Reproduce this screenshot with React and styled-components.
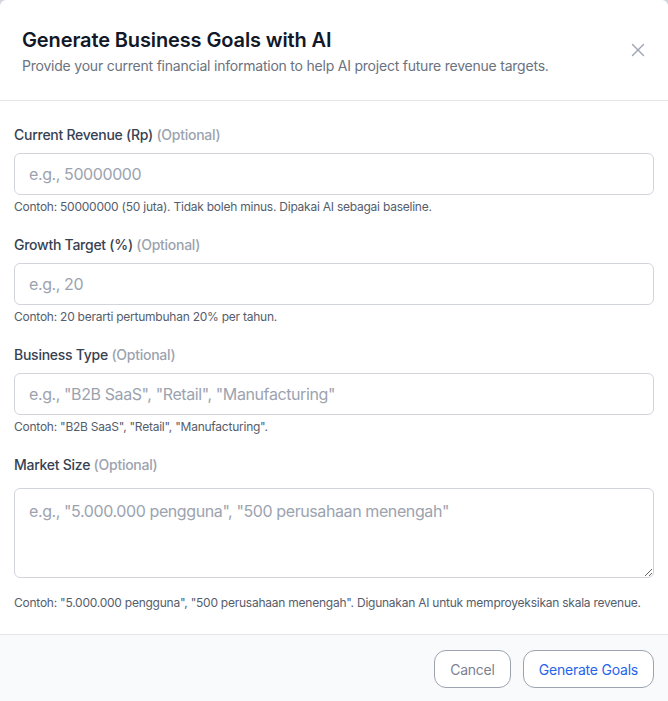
import React from 'react'
import styled, { createGlobalStyle } from 'styled-components';

const GlobalStyle = createGlobalStyle`
  html, body { margin: 0; padding: 0; background: #d1d5db; }
  body { font-family: Inter, "Noto Sans", sans-serif; }
  * { box-sizing: border-box; }
`;

const fields = [
  { label: 'Current Revenue (Rp)', placeholder: 'e.g., 50000000', help: 'Contoh: 50000000 (50 juta). Tidak boleh minus. Dipakai AI sebagai baseline.' },
  { label: 'Growth Target (%)', placeholder: 'e.g., 20', help: 'Contoh: 20 berarti pertumbuhan 20% per tahun.' },
  { label: 'Business Type', placeholder: 'e.g., "B2B SaaS", "Retail", "Manufacturing"', help: 'Contoh: "B2B SaaS", "Retail", "Manufacturing".' },
];

function App() {
  return (
    <>
      <GlobalStyle />
      <Dialog>
        <Header>
          <HeaderText>
            <Title>Generate Business Goals with AI</Title>
            <Subtitle>Provide your current financial information to help AI project future revenue targets.</Subtitle>
          </HeaderText>
          <CloseButton aria-label="Close">
            <svg width="14" height="14" viewBox="0 0 14 14" fill="none">
              <path d="M1.5 1.5l11 11M12.5 1.5l-11 11" stroke="#9ca3af" strokeWidth="1.4" strokeLinecap="round" />
            </svg>
          </CloseButton>
        </Header>
        <Body>
          {fields.map((f) => (
            <Field key={f.label}>
              <Label>{f.label} <Optional>(Optional)</Optional></Label>
              <Input placeholder={f.placeholder} />
              <Help>{f.help}</Help>
            </Field>
          ))}
          <Field>
            <Label>Market Size <Optional>(Optional)</Optional></Label>
            <TextArea placeholder={'e.g., "5.000.000 pengguna", "500 perusahaan menengah"'} />
            <Help $gap="17px">Contoh: "5.000.000 pengguna", "500 perusahaan menengah". Digunakan AI untuk memproyeksikan skala revenue.</Help>
          </Field>
        </Body>
        <Footer>
          <Button>Cancel</Button>
          <Button $primary>Generate Goals</Button>
        </Footer>
      </Dialog>
    </>
  )
}

const Dialog = styled.div`
width: 668px;
height: 701px;
background: #fff;
border-radius: 6px 6px 0 0;
display: flex;
flex-direction: column;
overflow: hidden;
`;

const Header = styled.div`
display: flex;
justify-content: space-between;
align-items: flex-start;
padding: 26px 22px 0 22px;
height: 101px;
border-bottom: 1px solid #e5e7eb;
`;

const HeaderText = styled.div`
display: flex;
flex-direction: column;
`;

const Title = styled.h2`
margin: 0;
font-size: 20px;
line-height: 28px;
font-weight: 600;
color: #111827;
letter-spacing: -0.12px;
`;

const Subtitle = styled.p`
margin: 2px 0 0;
font-size: 14px;
line-height: 20px;
color: #6b7280;
letter-spacing: -0.22px;
`;

const CloseButton = styled.button`
border: none;
background: none;
padding: 0;
margin-top: 16px;
width: 16px;
height: 16px;
display: flex;
align-items: center;
justify-content: center;
cursor: pointer;
`;

const Body = styled.div`
padding: 24px 14px 23px;
display: flex;
flex-direction: column;
gap: 20px;
flex: 1;
`;

const Field = styled.div`
display: flex;
flex-direction: column;
`;

const Label = styled.label`
font-size: 14px;
line-height: 20px;
font-weight: 500;
color: #374151;
letter-spacing: -0.26px;
margin-bottom: 8px;
`;

const Optional = styled.span`
color: #9ca3af;
font-weight: 500;
`;

const Input = styled.input`
height: 42px;
width: 100%;
border: 1px solid #d1d5db;
border-radius: 6px;
padding: 0 14px;
font-family: inherit;
font-size: 16px;
letter-spacing: -0.4px;
color: #111827;
outline: none;
&::placeholder { color: #9ca3af; }
`;

const TextArea = styled.textarea`
display: block;
height: 90px;
width: 100%;
margin-top: 5px;
border: 1px solid #d1d5db;
border-radius: 6px;
padding: 10px 14px;
font-family: inherit;
font-size: 16px;
line-height: 24px;
letter-spacing: -0.4px;
color: #111827;
outline: none;
resize: vertical;
&::placeholder { color: #9ca3af; }
`;

const Help = styled.p`
margin: ${(p) => p.$gap || '4px'} 0 0;
font-size: 12px;
line-height: 16px;
letter-spacing: -0.24px;
color: #555d6b;
`;

const Footer = styled.div`
height: 67px;
background: #f9fafb;
border-top: 1px solid #e5e7eb;
display: flex;
justify-content: flex-end;
align-items: center;
gap: 12px;
padding: 2px 14px 0;
`;

const Button = styled.button`
height: 38px;
padding: 0 15px;
border: 1px solid #9ca3af;
border-radius: 12px;
background: #fff;
font-family: inherit;
font-size: 14px;
letter-spacing: -0.22px;
color: ${(p) => (p.$primary ? '#2563eb' : '#7b8190')};
cursor: pointer;
`;

export default App
